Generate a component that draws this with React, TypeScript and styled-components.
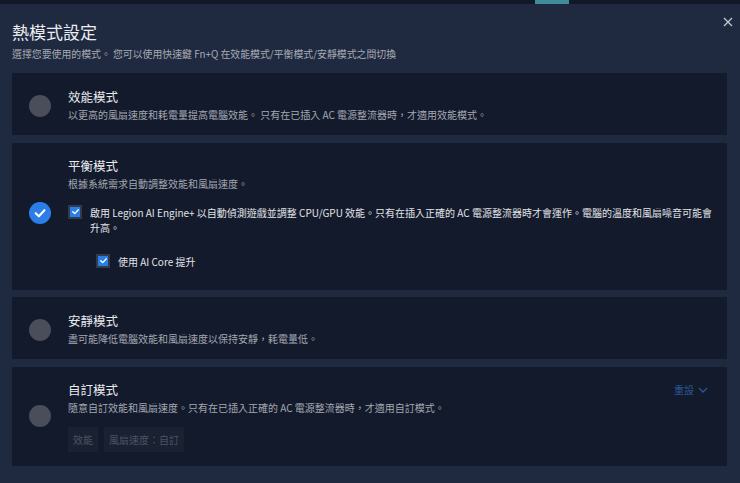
import React, { useState } from 'react';
import styled, { createGlobalStyle } from 'styled-components';

const GlobalStyle = createGlobalStyle`
  body {
    margin: 0;
    background: #1f2a40;
    font-family: 'Noto Sans CJK TC', 'Noto Sans', sans-serif;
  }
`;

const Dialog = styled.div`
  width: 740px;
  height: 483px;
  background: #1f2a40;
  overflow: hidden;
  display: flex;
  flex-direction: column;
`;

const TopStrip = styled.div`
  height: 4px;
  flex-shrink: 0;
  background: #121826;
  display: flex;
`;

const StripTab = styled.div`
  width: 34px;
  margin-left: 535px;
  background: #3f8d9a;
`;

const Header = styled.div`
  display: flex;
  justify-content: space-between;
  align-items: flex-start;
  padding: 16px 5px 0 12px;
`;

const Title = styled.h1`
  margin: 0;
  font-size: 17px;
  line-height: 24px;
  font-weight: 400;
  color: #eceef2;
`;

const Subtitle = styled.p`
  margin: 3px 0 0;
  font-size: 9.9px;
  line-height: 14px;
  color: #a7abb4;
`;

const CloseButton = styled.button`
  margin-top: -5px;
  width: 14px;
  height: 14px;
  padding: 0;
  border: none;
  background: transparent;
  display: flex;
  align-items: center;
  justify-content: center;
  cursor: pointer;
`;

const CardList = styled.div`
  display: flex;
  flex-direction: column;
  gap: 7.5px;
  padding: 12px 13px 0 12px;
`;

const Card = styled.div<{ $pad: string }>`
  display: grid;
  grid-template-columns: 56px 1fr auto;
  padding: ${(p) => p.$pad};
  padding-right: 10px;
  background: #131a2b;
  cursor: pointer;
`;

const RadioCol = styled.div`
  display: flex;
  align-items: center;
  justify-content: center;
`;

const Radio = styled.div<{ $on: boolean }>`
  width: 22px;
  height: 22px;
  border-radius: 50%;
  background: ${(p) => (p.$on ? '#2b7de8' : '#4a4e5a')};
  display: flex;
  align-items: center;
  justify-content: center;
`;

const Content = styled.div`
  display: flex;
  flex-direction: column;
  min-width: 0;
`;

const ModeName = styled.div`
  font-size: 12.5px;
  line-height: 18px;
  color: #e8eaee;
`;

const ModeDesc = styled.div`
  margin-top: 1px;
  font-size: 10px;
  line-height: 16px;
  color: #a3a8b2;
`;

const CheckRow = styled.label<{ $indent?: boolean }>`
  display: flex;
  align-items: flex-start;
  gap: 8px;
  margin-top: ${(p) => (p.$indent ? '19px' : '13px')};
  margin-left: ${(p) => (p.$indent ? '28px' : '0')};
  font-size: 10px;
  line-height: 15px;
  color: #e2e4e9;
  cursor: pointer;
`;

const Box = styled.span`
  flex-shrink: 0;
  width: 10px;
  height: 10px;
  border: 2px solid #323a4d;
  background: #2b7de8;
  display: flex;
  align-items: center;
  justify-content: center;
`;

const Chips = styled.div`
  display: flex;
  gap: 6px;
  margin-top: 11px;
`;

const Chip = styled.span`
  height: 25px;
  padding: 0 5px;
  display: flex;
  align-items: center;
  background: #1a2131;
  font-size: 10px;
  color: #4b5468;
`;

const ResetLink = styled.div`
  display: flex;
  align-items: center;
  gap: 4px;
  height: 18px;
  margin-right: 9px;
  font-size: 10px;
  color: #2b5795;
`;

const Check = ({ size, stroke }: { size: number; stroke: number }) => (
  <svg width={size} height={size} viewBox="0 0 12 12" fill="none">
    <path d="M2.3 6.2 L5 8.8 L9.8 3.6" stroke="#fff" strokeWidth={stroke} strokeLinecap="round" strokeLinejoin="round" />
  </svg>
);

const CheckBox = ({ children, indent }: { children: React.ReactNode; indent?: boolean }) => (
  <CheckRow $indent={indent}>
    <Box>
      <Check size={9} stroke={1.8} />
    </Box>
    <span>{children}</span>
  </CheckRow>
);

const modes = [
  {
    name: '效能模式',
    desc: '以更高的風扇速度和耗電量提高電腦效能。 只有在已插入 AC 電源整流器時，才適用效能模式。',
  },
  { name: '平衡模式', desc: '根據系統需求自動調整效能和風扇速度。' },
  { name: '安靜模式', desc: '盡可能降低電腦效能和風扇速度以保持安靜，耗電量低。' },
  {
    name: '自訂模式',
    desc: '隨意自訂效能和風扇速度。只有在已插入正確的 AC 電源整流器時，才適用自訂模式。',
  },
];

const App = () => {
  const [active, setActive] = useState<number>(1);

  return (
    <Dialog>
      <GlobalStyle />
      <TopStrip>
        <StripTab />
      </TopStrip>
      <Header>
        <div>
          <Title>熱模式設定</Title>
          <Subtitle>選擇您要使用的模式。 您可以使用快速鍵 Fn+Q 在效能模式/平衡模式/安靜模式之間切換</Subtitle>
        </div>
        <CloseButton aria-label="close">
          <svg width="10" height="10" viewBox="0 0 10 10">
            <path d="M1 1 L9 9 M9 1 L1 9" stroke="#c9ccd3" strokeWidth="1.2" />
          </svg>
        </CloseButton>
      </Header>
      <CardList>
        {modes.map((m, index) => {
          const on = active === index;
          const pad = index === 1 ? '14px 0 21px' : index === 3 ? '14px 0 14px' : '15px 0 12px';
          return (
            <Card key={index} $pad={pad} onClick={() => setActive(index)}>
              <RadioCol>
                <Radio $on={on}>{on && <Check size={14} stroke={1.8} />}</Radio>
              </RadioCol>
              <Content>
                <ModeName>{m.name}</ModeName>
                <ModeDesc>{m.desc}</ModeDesc>
                {index === 1 && (
                  <>
                    <CheckBox>
                      啟用 Legion AI Engine+ 以自動偵測遊戲並調整 CPU/GPU 效能。只有在插入正確的 AC 電源整流器時才會運作。電腦的溫度和風扇噪音可能會升高。
                    </CheckBox>
                    <CheckBox indent>使用 AI Core 提升</CheckBox>
                  </>
                )}
                {index === 3 && (
                  <Chips>
                    <Chip>效能</Chip>
                    <Chip>風扇速度：自訂</Chip>
                  </Chips>
                )}
              </Content>
              <div>
                {index === 3 && (
                  <ResetLink>
                    重設
                    <svg width="10" height="6" viewBox="0 0 10 6" fill="none">
                      <path d="M1 1 L5 5 L9 1" stroke="#2b5795" strokeWidth="1.3" />
                    </svg>
                  </ResetLink>
                )}
              </div>
            </Card>
          );
        })}
      </CardList>
    </Dialog>
  );
};

export default App;
